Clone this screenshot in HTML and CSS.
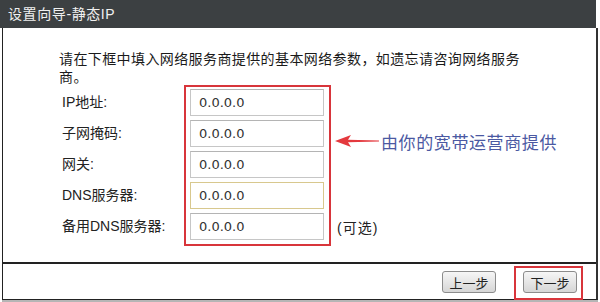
FILE: index.html
```html
<!DOCTYPE html>
<html lang="zh-CN">
<head>
  <meta charset="UTF-8" />
  <title>设置向导-静态IP</title>
  <link rel="stylesheet" href="styles.css">
</head>
<body>
  <div class="dialog">
    <div class="title">设置向导-静态IP</div>
    <div class="panel">
      <div class="content">
        <p class="intro">请在下框中填入网络服务商提供的基本网络参数，如遗忘请咨询网络服务商。</p>
        <div class="form">
          <div class="labels">
            <div class="label">IP地址:</div>
            <div class="label">子网掩码:</div>
            <div class="label">网关:</div>
            <div class="label">DNS服务器:</div>
            <div class="label">备用DNS服务器:</div>
          </div>
          <div class="fields">
            <input type="text" value="0.0.0.0">
            <input type="text" value="0.0.0.0">
            <input type="text" value="0.0.0.0">
            <input type="text" value="0.0.0.0" class="focus">
            <input type="text" value="0.0.0.0">
          </div>
          <div class="notes">
            <div class="callout">
              <svg class="arrow" width="44" height="14" viewBox="0 0 44 14">
                <path d="M0 7 L16 1 L13 5.8 L44 6.4 L44 7.6 L13 8.2 L16 13 Z" fill="#e4393e"/>
              </svg>
              <span>由你的宽带运营商提供</span>
            </div>
            <div class="optional">(可选)</div>
          </div>
        </div>
      </div>
      <div class="footer">
        <button class="btn prev">上一步</button>
        <div class="mark">
          <button class="btn">下一步</button>
        </div>
      </div>
    </div>
  </div>
</body>
</html>
```

FILE: styles.css
```css
body {
  margin: 0;
  background: white;
  font-family: "Liberation Sans", "Noto Sans CJK SC", sans-serif;
  font-size: 14px;
  color: #222;
  overflow: hidden;
}
.dialog {
  width: 600px;
  height: 302px;
}
.title {
  width: 588px;
  height: 28px;
  line-height: 28px;
  padding-left: 8px;
  background: #3c4042;
  color: #f0f0f0;
  font-size: 14px;
  letter-spacing: 0.6px;
}
.panel {
  margin-left: 2px;
  width: 593px;
  height: 271px;
  border-left: 1px solid #222;
  border-right: 2px solid #333;
  border-bottom: 1px solid #222;
  box-shadow: 0 2px 0 #b5b5b5;
}
.content {
  height: 234px;
  padding-left: 56px;
  padding-top: 22px;
  box-sizing: border-box;
}
.intro {
  margin: 0;
  width: 485px;
  line-height: 18px;
  letter-spacing: 0.4px;
  color: #1a1a1a;
}
.form {
  display: flex;
  margin-top: -1px;
}
.labels {
  width: 122px;
  margin-left: 3px;
  padding-top: 4px;
  display: flex;
  flex-direction: column;
  gap: 4px;
}
.label {
  height: 27px;
  line-height: 27px;
}
.fields {
  border: 2px solid #d8353b;
  padding: 2px 5px 4px 4px;
  display: flex;
  flex-direction: column;
  gap: 4px;
}
.fields input {
  width: 134px;
  height: 27px;
  box-sizing: border-box;
  margin: 0;
  padding: 0 0 0 8px;
  border: 1px solid #c6c6c6;
  border-top-color: #b4b4b4;
  font-family: "DejaVu Sans", sans-serif;
  font-size: 13px;
  color: #333;
  outline: none;
}
.fields input.focus {
  border-color: #d8c88e;
}
.notes {
  display: flex;
  flex-direction: column;
  margin-left: 4px;
  padding-bottom: 5px;
}
.callout {
  display: flex;
  align-items: center;
  gap: 2px;
  margin-top: 45px;
  height: 22px;
  color: #4b59a2;
  font-family: "Noto Sans CJK SC", sans-serif;
  font-size: 17px;
  letter-spacing: 0.6px;
}
.arrow {
  flex: none;
}
.optional {
  margin-top: auto;
  margin-left: 2px;
  height: 27px;
  line-height: 29px;
  letter-spacing: 1px;
}
.footer {
  height: 35px;
  border-top: 2px solid #222;
  display: flex;
  justify-content: flex-end;
  align-items: flex-start;
  padding-right: 13px;
}
.btn {
  width: 54px;
  height: 22px;
  padding: 0;
  border: 1px solid #8c8c8c;
  border-radius: 3px;
  background: linear-gradient(#f6f6f6, #d6d6d6);
  font-family: "Noto Sans CJK SC", sans-serif;
  font-size: 13px;
  color: #222;
}
.prev {
  margin-top: 7px;
  margin-right: 18px;
}
.mark {
  margin-top: 2px;
  border: 2px solid #d8353b;
  padding: 3px 4px 5px 7px;
}
```
